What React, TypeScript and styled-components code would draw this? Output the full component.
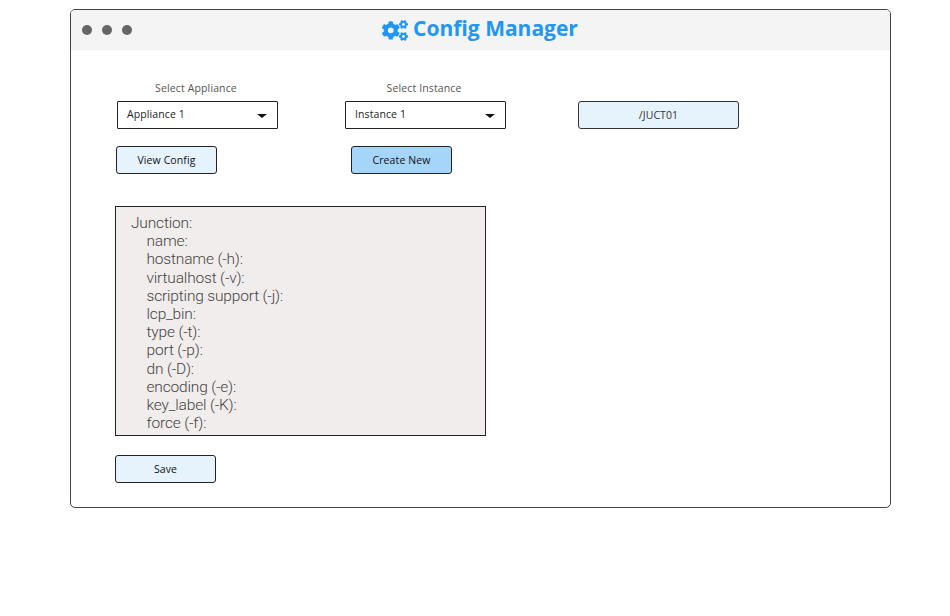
import React from "react";
import styled, { createGlobalStyle } from "styled-components";
import { FaCogs } from "react-icons/fa";

const GlobalStyle = createGlobalStyle`
  html, body {
    margin: 0;
    padding: 0;
    background: #fff;
  }
  body {
    font-family: "Open Sans", "Noto Sans", sans-serif;
  }
`;

const Page = styled.div`
  width: 950px;
  height: 616px;
  padding: 9px 0 0 70px;
  box-sizing: border-box;
`;

const Window = styled.div`
  width: 821px;
  height: 499px;
  box-sizing: border-box;
  border: 1px solid #444;
  border-radius: 5px;
  overflow: hidden;
`;

const TitleBar = styled.div`
  height: 40px;
  background: #f4f4f4;
  display: grid;
  grid-template-columns: 1fr auto 1fr;
  align-items: center;
`;

const Dots = styled.div`
  display: flex;
  gap: 10px;
  padding-left: 10.5px;
`;

const Dot = styled.span`
  width: 10px;
  height: 10px;
  border-radius: 50%;
  background: #666;
`;

const Title = styled.div`
  display: flex;
  align-items: center;
  gap: 5px;
  color: #2196f3;
  font-size: 21px;
  font-weight: 700;
  line-height: 28px;
  margin-right: 1px;
  margin-top: -4px;

  svg {
    width: 26px;
    height: 21px;
    margin-top: 4px;
  }
`;

const Content = styled.div`
  padding: 30px 0 0 44px;
`;

const ControlRow = styled.div`
  display: flex;
  align-items: flex-end;
`;

const Field = styled.div<{ $width: number }>`
  width: ${(p) => p.$width}px;
  display: flex;
  flex-direction: column;
  align-items: flex-start;
`;

const FieldLabel = styled.div`
  width: 161px;
  height: 21px;
  margin-left: 0.5px;
  font-size: 10.5px;
  letter-spacing: 0.13px;
  line-height: 16px;
  color: #555;
  text-align: center;
`;

const Select = styled.div`
  width: 161px;
  height: 28px;
  margin-left: 2px;
  box-sizing: border-box;
  border: 1px solid #222;
  border-radius: 1px;
  padding: 0 10px 2px 9px;
  display: flex;
  align-items: center;
  justify-content: space-between;
  font-size: 10.5px;
  letter-spacing: 0.1px;
  color: #222;
`;

const Caret = styled.span`
  width: 0;
  height: 0;
  margin-top: 4px;
  border-left: 5.5px solid transparent;
  border-right: 5.5px solid transparent;
  border-top: 4px solid #111;
`;

const Path = styled.div`
  width: 161px;
  height: 28px;
  margin-left: 2px;
  box-sizing: border-box;
  border: 1px solid #333;
  border-radius: 3px;
  background: #e6f3fd;
  display: flex;
  align-items: center;
  justify-content: center;
  font-size: 10.5px;
  letter-spacing: 0.1px;
  color: #333;
`;

const ButtonRow = styled.div`
  display: flex;
  padding: 17px 0 32px 1px;
`;

const Button = styled.button<{ $primary?: boolean; $gap?: number }>`
  width: 101px;
  height: 28px;
  padding: 0;
  margin-right: ${(p) => p.$gap ?? 0}px;
  box-sizing: border-box;
  border: 1px solid #222;
  border-radius: 3px;
  background: ${(p) => (p.$primary ? "#a6d5fa" : "#e6f3fd")};
  font-family: inherit;
  font-size: 10.5px;
  letter-spacing: 0.1px;
  color: #111;
`;

const ConfigBox = styled.div`
  width: 371px;
  height: 230px;
  box-sizing: border-box;
  border: 1px solid #222;
  background: #f1eded;
  padding: 7px 0 0 15px;
  font-family: "Roboto", sans-serif;
  font-weight: 300;
  font-size: 15.5px;
  letter-spacing: -0.17px;
  line-height: 18.2px;
  color: #444;
`;

const ConfigLine = styled.div<{ $indent?: boolean }>`
  padding-left: ${(p) => (p.$indent ? 15.5 : 0)}px;
  white-space: pre;
`;

const SaveRow = styled.div`
  padding-top: 19px;
`;

const configKeys = [
  "name:",
  "hostname (-h):",
  "virtualhost (-v):",
  "scripting support (-j):",
  "lcp_bin:",
  "type (-t):",
  "port (-p):",
  "dn (-D):",
  "encoding (-e):",
  "key_label (-K):",
  "force (-f):",
];

const App = () => (
  <Page>
    <GlobalStyle />
    <Window>
      <TitleBar>
        <Dots>
          <Dot />
          <Dot />
          <Dot />
        </Dots>
        <Title>
          <FaCogs />
          Config Manager
        </Title>
      </TitleBar>
      <Content>
        <ControlRow>
          <Field $width={228}>
            <FieldLabel>Select Appliance</FieldLabel>
            <Select>
              Appliance 1
              <Caret />
            </Select>
          </Field>
          <Field $width={233}>
            <FieldLabel>Select Instance</FieldLabel>
            <Select>
              Instance 1
              <Caret />
            </Select>
          </Field>
          <Path>/JUCT01</Path>
        </ControlRow>
        <ButtonRow>
          <Button $gap={134}>View Config</Button>
          <Button $primary>Create New</Button>
        </ButtonRow>
        <ConfigBox>
          <ConfigLine>Junction:</ConfigLine>
          {configKeys.map((key) => (
            <ConfigLine key={key} $indent>
              {key}
            </ConfigLine>
          ))}
        </ConfigBox>
        <SaveRow>
          <Button>Save</Button>
        </SaveRow>
      </Content>
    </Window>
  </Page>
);

export default App;
